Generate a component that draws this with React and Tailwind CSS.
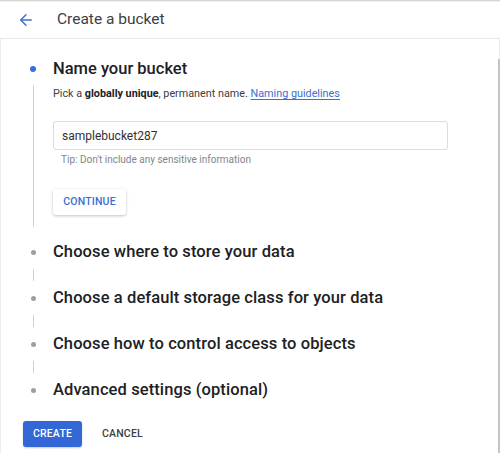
import { ArrowLeft } from "lucide-react";

const steps = [
  "Choose where to store your data",
  "Choose a default storage class for your data",
  "Choose how to control access to objects",
  "Advanced settings (optional)",
];

function Connector() {
  return (
    <div className="flex h-[22px]">
      <div className="w-[18px] flex justify-center">
        <div className="w-px h-[12px] mt-[5px] bg-[#d0d0d0]" />
      </div>
    </div>
  );
}

function Step({ label }) {
  return (
    <div className="flex items-center h-[24px]">
      <div className="w-[18px] flex justify-center">
        <div className="w-[5px] h-[5px] rounded-full bg-[#9e9e9e]" />
      </div>
      <div className="ml-[11px] text-[16.5px] text-[#202124] font-medium tracking-[0.1px]">
        {label}
      </div>
    </div>
  );
}

export default function App() {
  return (
    <div
      className="w-[500px] h-[453px] bg-white relative overflow-hidden text-[#202124]"
      style={{ fontFamily: "Roboto, 'Liberation Sans', sans-serif" }}
    >
      {/* top shadow */}
      <div className="h-[2px] bg-gradient-to-b from-[#c8c8c8] to-white" />

      {/* HEADER */}
      <div className="h-[37px] flex items-center border-b border-[#e8e8e8]">
        <ArrowLeft className="ml-[17px] w-[18px] h-[18px] text-[#3c6fd4]" strokeWidth={2} />
        <div className="ml-[22px] text-[15.5px] text-[#3c4043]">Create a bucket</div>
      </div>

      {/* BODY */}
      <div className="relative h-[414px] border-l border-r border-[#ececec] pl-[23px] pt-[18px]">
        {/* scrollbar */}
        <div className="absolute right-[-1px] top-[20px] bottom-0 w-[2px] bg-[#c4c4c4]" />

        {/* STEP 1 */}
        <div className="flex items-center h-[24px]">
          <div className="w-[18px] flex justify-center">
            <div className="w-[6px] h-[6px] rounded-full bg-[#3b6fd8]" />
          </div>
          <div className="ml-[11px] text-[16.5px] font-medium">Name your bucket</div>
        </div>

        <div className="flex">
          <div className="w-[18px] flex justify-center">
            <div className="w-px h-[142px] mt-[4px] bg-[#d0d0d0]" />
          </div>
          <div className="ml-[11px]">
            <div className="mt-[5px] text-[10.8px] leading-[16px] text-[#3c4043]">
              Pick a <span className="font-bold text-[#202124]">globally unique</span>, permanent name.{" "}
              <span className="text-[#3b6fd0] underline decoration-[#3b6fd0] underline-offset-2">
                Naming guidelines
              </span>
            </div>

            <div className="mt-[19px] w-[395px] h-[29px] border border-[#dcdcdc] rounded-[3px] flex items-center pl-[8px] text-[12px] text-[#303134]">
              samplebucket287
            </div>
            <div className="mt-[3px] pl-[8px] text-[10px] leading-[14px] text-[#80868b]">
              Tip: Don't include any sensitive information
            </div>

            <button className="mt-[22px] h-[26px] w-[73px] rounded-[3px] bg-white shadow-[0_1px_3px_rgba(0,0,0,0.25)] text-[10.5px] font-medium text-[#3b6fd0] tracking-[0.2px]">
              CONTINUE
            </button>
          </div>
        </div>

        <div className="mt-[13px]">
          {steps.map((s, i) => (
            <div key={s}>
              <Step label={s} />
              {i < steps.length - 1 && <Connector />}
            </div>
          ))}
        </div>

        {/* ACTIONS */}
        <div className="mt-[19px] flex items-center -ml-[1px]">
          <button className="h-[26px] w-[59px] rounded-[3px] bg-[#3367d6] text-white text-[10.5px] font-medium tracking-[0.2px] shadow-[0_1px_2px_rgba(0,0,0,0.2)]">
            CREATE
          </button>
          <button className="ml-[20px] text-[10.5px] font-medium text-[#3c4043] tracking-[0.2px]">
            CANCEL
          </button>
        </div>
      </div>
    </div>
  );
}
